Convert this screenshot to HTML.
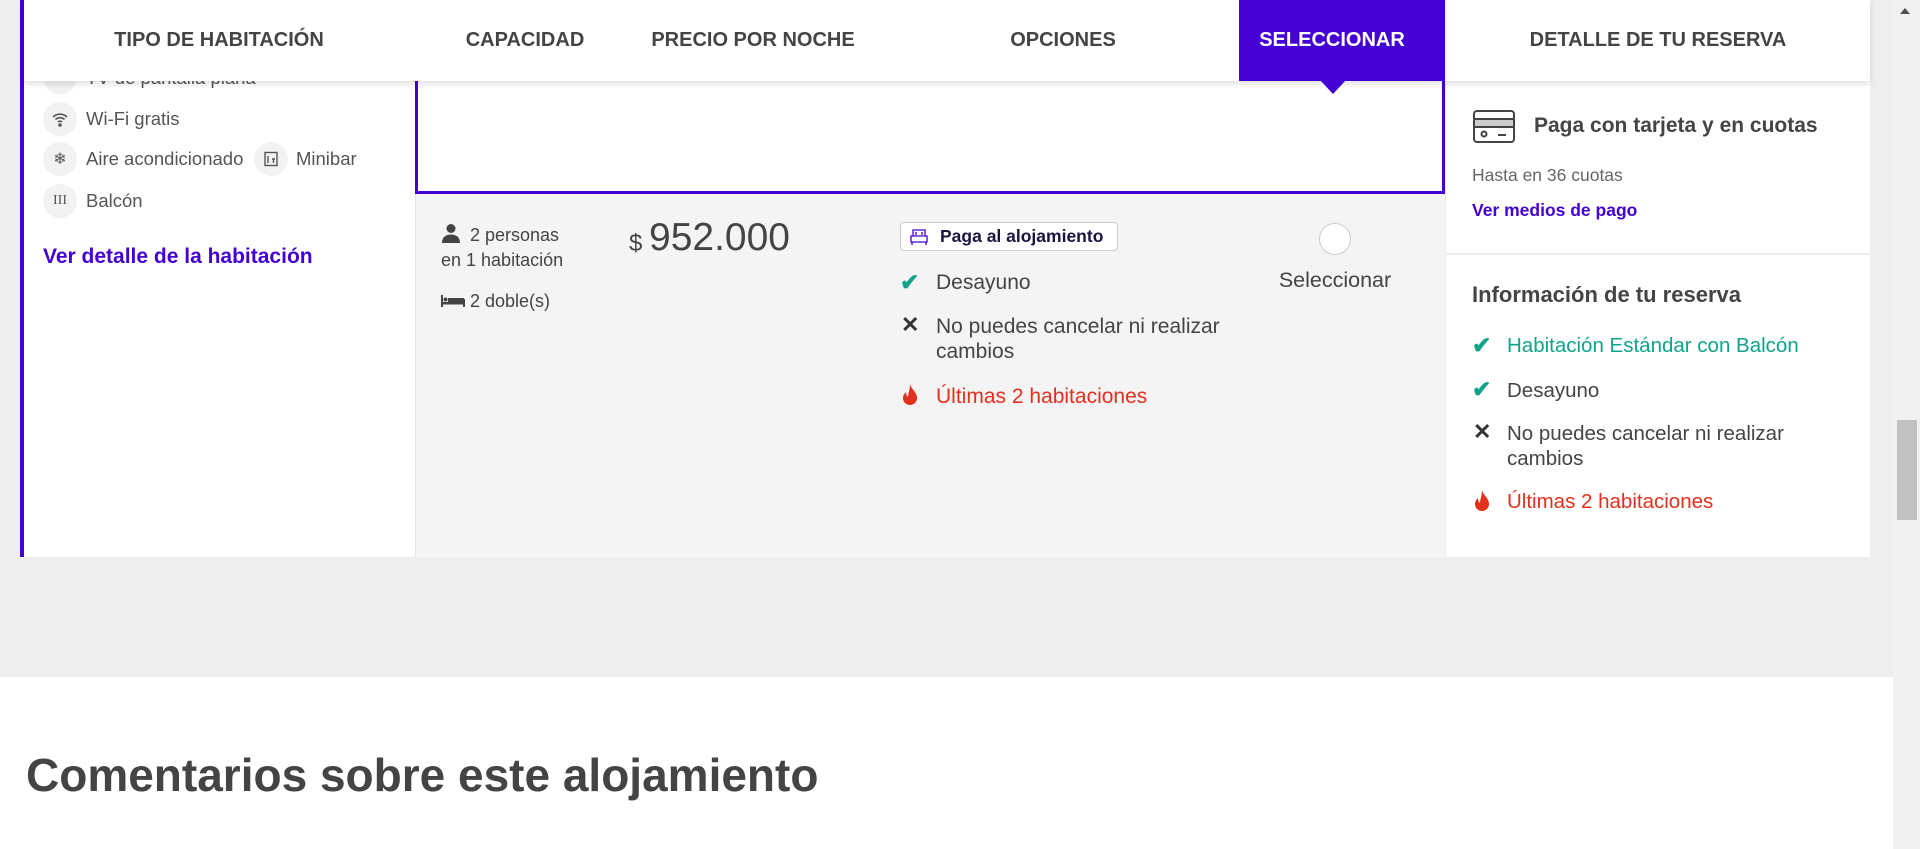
<!DOCTYPE html>
<html><head><meta charset="utf-8"><style>
*{margin:0;padding:0;box-sizing:border-box}
body{width:1920px;height:849px;overflow:hidden;background:#eeeeee;font-family:"Liberation Sans",sans-serif;color:#444;position:relative}
.a{position:absolute;white-space:nowrap}
.hdr{left:24px;top:0;width:1846px;height:81px;background:#fff;box-shadow:0 3px 6px rgba(0,0,0,.12);z-index:5}
.h{top:29px;font-weight:bold;font-size:20px;color:#444;transform:translateX(-50%)}
.ic{width:34px;height:34px;border-radius:50%;background:#f2f2f2;display:flex;align-items:center;justify-content:center}
.t18{font-size:18.5px;color:#555}
.t20{font-size:21px;color:#444}
</style></head><body>
<div class="a" style="left:20px;top:0;width:395px;height:557px;background:#fff;border-left:4px solid #4400d4"></div>
<div class="a ic" style="left:43px;top:60px"></div>
<div class="a t18" style="left:86px;top:67px">TV de pantalla plana</div>
<div class="a ic" style="left:43px;top:102px"><svg width="18" height="18" viewBox="0 0 18 18" fill="none" stroke="#555" stroke-width="1.6"><path d="M2 7a10 10 0 0 1 14 0M4.5 9.5a6.5 6.5 0 0 1 9 0M7 12a3 3 0 0 1 4 0"/><circle cx="9" cy="15" r="1" fill="#555"/></svg></div>
<div class="a t18" style="left:86px;top:108px">Wi-Fi gratis</div>
<div class="a ic" style="left:43px;top:142px"><span style="font-size:16px;color:#555">❄</span></div>
<div class="a t18" style="left:86px;top:148px">Aire acondicionado</div>
<div class="a ic" style="left:254px;top:142px"><svg width="16" height="16" viewBox="0 0 16 16" fill="none" stroke="#555" stroke-width="1.4"><rect x="2" y="1.5" width="12" height="13"/><path d="M5 5v7M9 8h3M10.5 8v4"/></svg></div>
<div class="a t18" style="left:296px;top:148px">Minibar</div>
<div class="a ic" style="left:43px;top:184px"><span style="font-size:14px;color:#555;font-family:'Liberation Serif',serif">III</span></div>
<div class="a t18" style="left:86px;top:190px">Balcón</div>
<div class="a" style="left:43px;top:245px;font-size:21px;font-weight:bold;color:#4400d4">Ver detalle de la habitación</div>

<div class="a" style="left:415px;top:0;width:1030px;height:194px;background:#fff;border:3px solid #4400d4;border-top:none"></div>
<div class="a" style="left:415px;top:194px;width:1030px;height:363px;background:#f4f4f4;border-left:1px solid #e3e3e3"></div>
<svg class="a" style="left:441px;top:223px" width="20" height="20" viewBox="0 0 20 20" fill="#444"><circle cx="10" cy="5.5" r="4.5"/><path d="M1 20c0-6 4-8.5 9-8.5s9 2.5 9 8.5z"/></svg>
<div class="a" style="left:470px;top:225px;font-size:18px;color:#444">2 personas</div>
<div class="a" style="left:441px;top:250px;font-size:18px;color:#444">en 1 habitación</div>
<svg class="a" style="left:441px;top:294px" width="24" height="14" viewBox="0 0 24 14" fill="#444"><rect x="0" y="1" width="2" height="12"/><rect x="22" y="5" width="2" height="8"/><rect x="0" y="8" width="24" height="2.5"/><rect x="7" y="4" width="16" height="4"/><circle cx="4.5" cy="5.5" r="2"/></svg>
<div class="a" style="left:470px;top:291px;font-size:18px;color:#444">2 doble(s)</div>
<div class="a" style="left:629px;top:230px;font-size:24px;color:#444">$</div>
<div class="a" style="left:649px;top:216px;font-size:39px;color:#444">952.000</div>
<div class="a" style="left:900px;top:222px;width:218px;height:29px;border:1px solid #ccc;border-radius:4px;background:#fff"></div>
<svg class="a" style="left:910px;top:228px" width="18" height="18" viewBox="0 0 18 18" fill="none" stroke="#4400d4" stroke-width="1.3"><path d="M3 2h12v6H3zM1 8h16v6H1zM2 14v3M16 14v3M6 4v3M12 4v3"/></svg>
<div class="a" style="left:940px;top:226px;font-size:17.5px;font-weight:bold;color:#1a1440">Paga al alojamiento</div>
<div class="a" style="left:900px;top:269px;font-size:23px;color:#10a38a;font-weight:bold">✔</div>
<div class="a t20" style="left:936px;top:271px">Desayuno</div>
<div class="a" style="left:901px;top:312px;font-size:22px;font-weight:bold;color:#333">✕</div>
<div class="a t20" style="left:936px;top:315px">No puedes cancelar ni realizar</div>
<div class="a t20" style="left:936px;top:340px">cambios</div>
<svg class="a" style="left:902px;top:384px" width="16" height="22" viewBox="0 0 16 22" fill="#e2301d"><path d="M8 0C9 5 15 8 15 14a7 7 0 0 1-14 0c0-3 2-5 3-6 0 3 1 4 2 5C6 9 8 6 8 0z"/></svg>
<div class="a" style="left:936px;top:385px;font-size:21px;color:#e2301d">Últimas 2 habitaciones</div>
<div class="a" style="left:1319px;top:223px;width:32px;height:32px;border-radius:50%;background:#fff;border:1px solid #ccc"></div>
<div class="a" style="left:1335px;top:268px;font-size:21.5px;color:#444;transform:translateX(-50%)">Seleccionar</div>

<div class="a" style="left:1446px;top:0;width:424px;height:557px;background:#fff"></div>
<div class="a" style="left:1446px;top:253px;width:424px;height:2px;background:#eee"></div>
<svg class="a" style="left:1473px;top:110px" width="42" height="34" viewBox="0 0 42 34" fill="none" stroke="#444" stroke-width="2"><rect x="1" y="1" width="40" height="31" rx="3"/><rect x="2" y="9" width="38" height="8" fill="#ccc" stroke="none"/><path d="M1 9h40M1 17h40"/><circle cx="11" cy="24" r="2.5"/><path d="M25 25h8"/></svg>
<div class="a" style="left:1534px;top:114px;font-size:21px;font-weight:bold;color:#444">Paga con tarjeta y en cuotas</div>
<div class="a" style="left:1472px;top:165px;font-size:17.5px;color:#666">Hasta en 36 cuotas</div>
<div class="a" style="left:1472px;top:200px;font-size:17.5px;font-weight:bold;color:#4400d4">Ver medios de pago</div>
<div class="a" style="left:1472px;top:282px;font-size:22px;font-weight:bold;color:#444">Información de tu reserva</div>
<div class="a" style="left:1472px;top:332px;font-size:23px;color:#10a38a;font-weight:bold">✔</div>
<div class="a" style="left:1507px;top:334px;font-size:20.5px;color:#10a38a">Habitación Estándar con Balcón</div>
<div class="a" style="left:1472px;top:376px;font-size:23px;color:#10a38a;font-weight:bold">✔</div>
<div class="a" style="left:1507px;top:379px;font-size:20.5px;color:#444">Desayuno</div>
<div class="a" style="left:1473px;top:419px;font-size:22px;font-weight:bold;color:#333">✕</div>
<div class="a" style="left:1507px;top:422px;font-size:20.5px;color:#444">No puedes cancelar ni realizar</div>
<div class="a" style="left:1507px;top:447px;font-size:20.5px;color:#444">cambios</div>
<svg class="a" style="left:1474px;top:490px" width="16" height="22" viewBox="0 0 16 22" fill="#e2301d"><path d="M8 0C9 5 15 8 15 14a7 7 0 0 1-14 0c0-3 2-5 3-6 0 3 1 4 2 5C6 9 8 6 8 0z"/></svg>
<div class="a" style="left:1507px;top:490px;font-size:20.5px;color:#e2301d">Últimas 2 habitaciones</div>

<div class="a hdr"></div>
<div class="a" style="left:1239px;top:0;width:206px;height:81px;background:#4400d4;z-index:6"></div>
<div class="a" style="left:1320px;top:80px;width:0;height:0;border-left:13px solid transparent;border-right:13px solid transparent;border-top:14px solid #4400d4;z-index:6"></div>
<div class="a h" style="left:219px;z-index:7">TIPO DE HABITACIÓN</div>
<div class="a h" style="left:525px;z-index:7">CAPACIDAD</div>
<div class="a h" style="left:753px;z-index:7">PRECIO POR NOCHE</div>
<div class="a h" style="left:1063px;z-index:7">OPCIONES</div>
<div class="a h" style="left:1332px;z-index:7;color:#fff">SELECCIONAR</div>
<div class="a h" style="left:1658px;z-index:7">DETALLE DE TU RESERVA</div>

<div class="a" style="left:0;top:677px;width:1893px;height:172px;background:#fff"></div>
<div class="a" style="left:26px;top:748px;font-size:46px;font-weight:bold;color:#444">Comentarios sobre este alojamiento</div>

<div class="a" style="left:1893px;top:0;width:27px;height:849px;background:#f1f1f1"></div>
<div class="a" style="left:1900px;top:8px;width:0;height:0;border-left:5px solid transparent;border-right:5px solid transparent;border-bottom:6px solid #505050"></div>
<div class="a" style="left:1897px;top:420px;width:20px;height:100px;background:#c1c1c1"></div>
</body></html>
